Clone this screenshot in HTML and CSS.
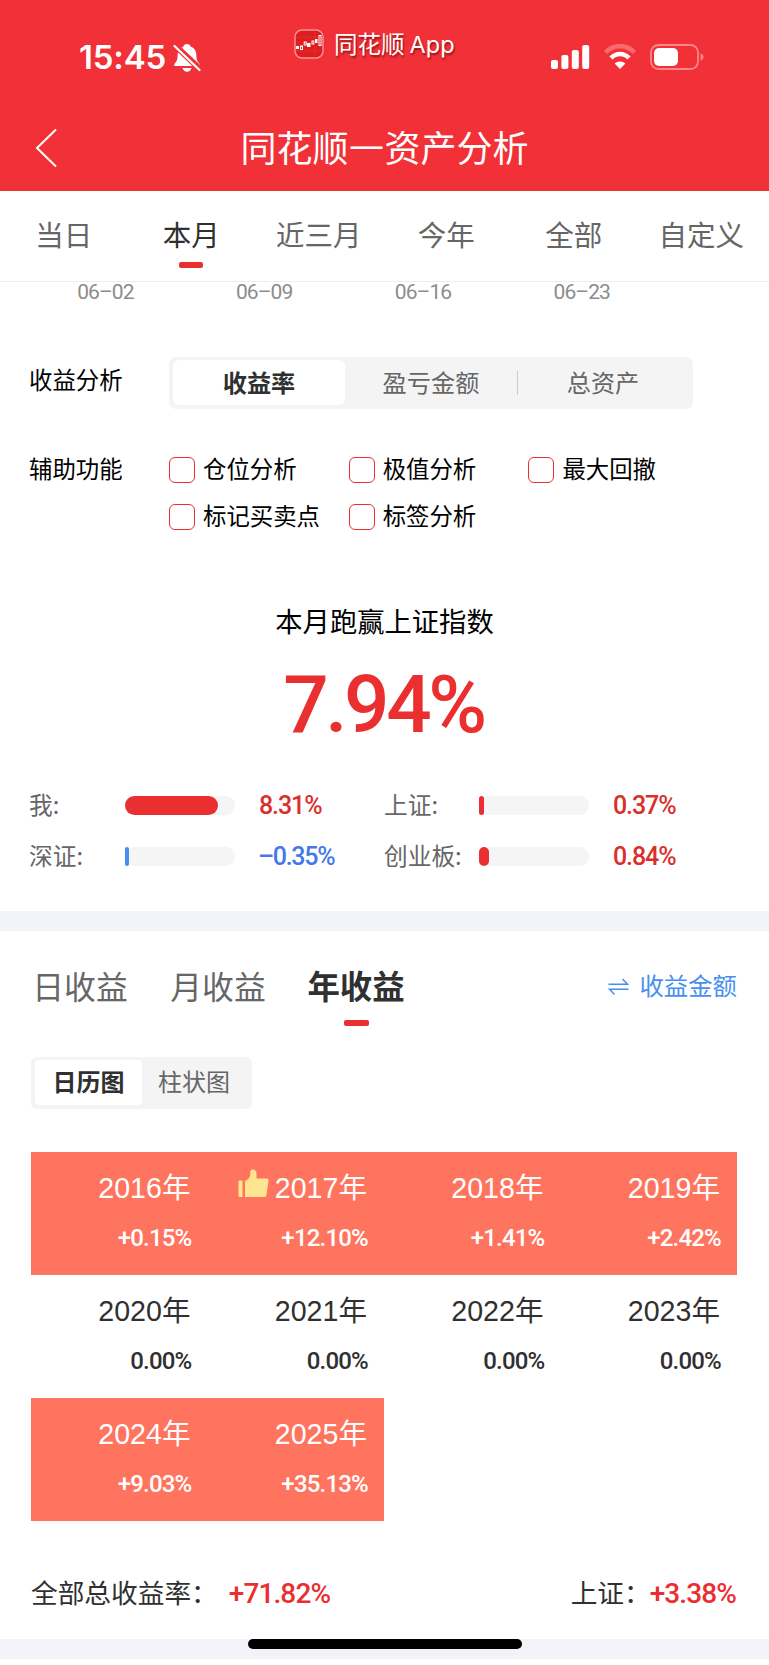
FILE: index.html
```html
<!DOCTYPE html>
<html lang="zh-CN">
<head>
  <meta charset="UTF-8">
  <title>同花顺—资产分析</title>
  <link rel="stylesheet" href="styles.css">
</head>
<body>
  <header class="header">
    <div class="status-bar">
      <div class="status-time">
        <span>15:45</span>
        <svg width="28" height="30" viewBox="0 0 28 30">
          <path d="M14 1c2 0 3.300 1.100 3.700 2.700 4 1.300 5.700 4.600 5.700 8.800 0 4.500 1.300 6.300 3 8.200.9 1 .8 2.300-.6 2.300H2.200c-1.400 0-1.500-1.300-.6-2.300 1.700-1.900 3-3.700 3-8.200 0-4.200 1.700-7.500 5.700-8.800C10.700 2.100 12 1 14 1z" fill="#fff"/>
          <path d="M9.500 25h9c-.6 2.300-2.400 3.700-4.500 3.700S10.100 27.300 9.500 25z" fill="#fff"/>
          <path d="M0 .5L28 27" stroke="#f23037" stroke-width="6"/>
          <path d="M1.500 3L26.500 27" stroke="#fff" stroke-width="2.200" stroke-linecap="round"/>
        </svg>
      </div>
      <div class="status-app">
        <svg width="30" height="30" viewBox="0 0 30 30">
          <rect x="1" y="1" width="28" height="28" rx="7" fill="#dd1d20" stroke="#f79296" stroke-width="1.500"/>
          <path d="M1 8h28M1 22h28M21 1v28" stroke="#e8393b" stroke-width=".6"/>
          <g fill="#fff">
            <rect x="2" y="17" width="3" height="3"/>
            <rect x="13" y="14" width="3.500" height="4"/>
            <rect x="21" y="10" width="2.500" height="4"/>
          </g>
          <g fill="none" stroke="#fff" stroke-width="1">
            <rect x="6.500" y="17" width="2" height="3.500"/>
            <rect x="10.200" y="13" width="2" height="3"/>
            <rect x="18" y="12" width="1.800" height="3"/>
            <rect x="25" y="6.500" width="2" height="10"/>
          </g>
        </svg>
        <span>同花顺 App</span>
      </div>
      <div class="status-icons">
        <svg width="39" height="26" viewBox="0 0 39 26" fill="#fff">
          <rect x="0" y="16" width="7" height="9" rx="2"/>
          <rect x="10.400" y="11" width="7" height="14" rx="2"/>
          <rect x="20.800" y="6" width="7" height="19" rx="2"/>
          <rect x="31.200" y="1" width="7" height="24" rx="2"/>
        </svg>
        <svg width="32" height="26" viewBox="0 0 32 26" fill="none">
          <path d="M1.500 8.500C9.500 0 22.500 0 30.500 8.500" stroke="#f76a6f" stroke-width="4.500"/>
          <path d="M7 14C12 8.700 20 8.700 25 14" stroke="#fff" stroke-width="4.500"/>
          <path d="M16 25l-5.400-5.600c3-2.700 7.800-2.700 10.800 0z" fill="#fff"/>
        </svg>
        <svg width="54" height="26" viewBox="0 0 54 26">
          <rect x="1" y="1" width="47" height="24" rx="7.500" fill="none" stroke="#f9878b" stroke-width="1.800"/>
          <rect x="4" y="4" width="24" height="18" rx="5" fill="#fff"/>
          <path d="M50.500 9.500c2 .6 3 1.900 3 3.500s-1 2.900-3 3.500z" fill="#f9878b"/>
        </svg>
      </div>
    </div>
    <div class="nav-bar">
      <svg class="back" width="22" height="40" viewBox="0 0 22 40">
        <path d="M21 1.500L2 20l19 18.500" fill="none" stroke="#fff" stroke-width="2"/>
      </svg>
      <h1>同花顺<span class="dash">—</span>资产分析</h1>
    </div>
  </header>

  <nav class="period-tabs">
    <span>当日</span>
    <span class="active">本月</span>
    <span>近三月</span>
    <span>今年</span>
    <span>全部</span>
    <span>自定义</span>
  </nav>

  <section class="analysis">
    <div class="dates">
      <span>06–02</span>
      <span>06–09</span>
      <span>06–16</span>
      <span>06–23</span>
    </div>

    <div class="row">
      <div class="label">收益分析</div>
      <div class="segment">
        <span class="active">收益率</span>
        <span>盈亏金额</span>
        <span class="divided">总资产</span>
      </div>
    </div>

    <div class="row helpers">
      <div class="label">辅助功能</div>
      <div class="checks">
        <label><i class="box"></i>仓位分析</label>
        <label><i class="box"></i>极值分析</label>
        <label><i class="box"></i>最大回撤</label>
        <label><i class="box"></i>标记买卖点</label>
        <label><i class="box"></i>标签分析</label>
      </div>
    </div>

    <div class="summary-title">本月跑赢上证指数</div>
    <div class="summary-value">7.94%</div>

    <div class="compare">
      <div class="compare-item">
        <span class="name">我:</span>
        <span class="track"><i class="fill" style="width: 93px"></i></span>
        <span class="value">8.31%</span>
      </div>
      <div class="compare-item">
        <span class="name">上证:</span>
        <span class="track"><i class="fill" style="width: 5px"></i></span>
        <span class="value">0.37%</span>
      </div>
      <div class="compare-item down">
        <span class="name">深证:</span>
        <span class="track"><i class="fill" style="width: 4px"></i></span>
        <span class="value">–0.35%</span>
      </div>
      <div class="compare-item">
        <span class="name">创业板:</span>
        <span class="track"><i class="fill" style="width: 10px"></i></span>
        <span class="value">0.84%</span>
      </div>
    </div>
  </section>

  <section class="income">
    <div class="income-head">
      <span>日收益</span>
      <span>月收益</span>
      <span class="active">年收益</span>
      <a class="switch">
        <svg width="21" height="18" viewBox="0 0 21 18" fill="none" stroke="#468ff0" stroke-width="1.500">
          <path d="M.5 6.200h19L14.500 1"/>
          <path d="M20.500 11.300h-19L6.500 16.500"/>
        </svg>
        收益金额
      </a>
    </div>

    <div class="chart-toggle">
      <span class="active">日历图</span>
      <span>柱状图</span>
    </div>

    <div class="years">
      <div class="year up"><b>2016年</b><em>+0.15%</em></div>
      <div class="year up">
        <b><svg class="thumb" width="31" height="29" viewBox="0 0 31 29" fill="#ffe58f">
          <path d="M.5 12.500q0-1 1-1H4.500v16.500H1.500q-1 0-1-1z"/>
          <path d="M7 12c3.500-1.500 5-3.500 5.300-6.500V3c0-1.700 1-2.500 2.500-2.500 2.300 0 3.700 1.500 3.700 4V9.500h10c1.600 0 2.300.8 2 2.300l-2 14.500c-.2 1.200-.9 1.700-2 1.700H7z"/>
        </svg>2017年</b><em>+12.10%</em>
      </div>
      <div class="year up"><b>2018年</b><em>+1.41%</em></div>
      <div class="year up"><b>2019年</b><em>+2.42%</em></div>
      <div class="year"><b>2020年</b><em>0.00%</em></div>
      <div class="year"><b>2021年</b><em>0.00%</em></div>
      <div class="year"><b>2022年</b><em>0.00%</em></div>
      <div class="year"><b>2023年</b><em>0.00%</em></div>
      <div class="year up"><b>2024年</b><em>+9.03%</em></div>
      <div class="year up"><b>2025年</b><em>+35.13%</em></div>
    </div>

    <div class="total">
      <span>全部总收益率：</span><strong>+71.82%</strong>
      <span class="index">上证：</span><strong>+3.38%</strong>
    </div>
  </section>

  <footer class="bottom"><div class="home-indicator"></div></footer>
</body>
</html>
```

FILE: styles.css
```css
* { box-sizing: border-box; }
body {
  margin: 0;
  width: 769px;
  height: 1665px;
  overflow: hidden;
  background: #fff;
  color: #000;
  font-family: "Noto Sans CJK SC", sans-serif;
}
svg { display: block; flex: none; }
i, em { font-style: normal; }

/* header */
.header { height: 191px; background: #f23037; color: #fff; }
.status-bar { display: flex; height: 102px; }
.status-time { display: flex; width: 293px; padding: 39px 0 0 79px; gap: 6px; }
.status-time span { width: 88px; font: 600 33px/36px Inter, sans-serif; letter-spacing: -0.2px; white-space: nowrap; }
.status-time svg { margin-top: 4px; }
.status-app { display: flex; width: 258px; padding: 29px 0 0 1px; gap: 10px; font: 23.5px/30px Inter, "Noto Sans CJK SC", sans-serif; word-spacing: -1.500px; text-shadow: 1px 2px 2px rgba(90, 0, 0, .6); }
.status-app span { margin-top: 1px; }
.status-icons { display: flex; gap: 14px; padding-top: 44px; }
.nav-bar { display: flex; height: 89px; padding: 0 36px 0 35px; }
.nav-bar h1 { flex: 1; margin: 4px 21px 0 0; font-size: 36px; line-height: 80px; font-weight: 400; text-align: center; }
.dash { -webkit-text-stroke: 1px #fff; }
.back { margin-top: 26px; }

/* period tabs */
.period-tabs { display: grid; grid-template-columns: repeat(6, 127.5px); height: 91px; border-bottom: 1px solid #eee; }
.period-tabs span { display: flex; flex-direction: column; align-items: center; padding-top: 22px; color: #666; font-size: 28.500px; line-height: 42px; }
.period-tabs .active { color: #303030; }
.period-tabs .active::after { content: ""; width: 24px; height: 6px; margin-top: 7px; border-radius: 2px; background: #ea2f31; }

/* chart dates */
.dates { display: grid; grid-template-columns: repeat(4, 158.800px); height: 75px; padding-left: 26px; text-align: center; color: #8c8c8c; font: 21px/21px Roboto, sans-serif; letter-spacing: -0.9px; }

.row { display: flex; height: 52px; padding-left: 29px; }
.label { width: 140px; font-size: 23.400px; line-height: 44px; }
.segment { display: grid; grid-template-columns: 172px 1fr 172px; width: 524px; padding: 3px 4px 4px; border-radius: 7px; background: #f4f4f4; color: #666; font-size: 24.200px; line-height: 43px; text-align: center; }
.segment .active { border-radius: 6px; background: #fff; color: #303030; font-weight: 700; }
.segment .divided { background: linear-gradient(#ccc, #ccc) 0 11px / 1px 24px no-repeat; }
.helpers { height: 190px; padding-top: 38px; }
.helpers .label { line-height: 43px; }
.checks { display: grid; grid-template-columns: repeat(3, 179.700px); grid-auto-rows: 47px; }
.checks label { display: flex; gap: 8px; font-size: 23.400px; line-height: 43px; }
.box { width: 26px; height: 26px; margin-top: 10px; border: 1px solid #ea2f31; border-radius: 6px; }

/* summary */
.summary-title { height: 44px; font-size: 27.300px; line-height: 42px; text-align: center; }
.summary-value { height: 140px; padding-right: 2px; color: #ea2f31; font: 500 80px/124px Roboto, sans-serif; letter-spacing: -3.400px; text-align: center; }
.compare { display: grid; grid-template-columns: 355px 1fr; grid-auto-rows: 51px; height: 128px; padding: 2px 0 0 29px; }
.compare-item { display: flex; align-items: center; height: 40px; }
.compare .name { width: 96px; margin-top: -3px; color: #666; font-size: 23.700px; line-height: 40px; }
.compare-item:nth-child(even) .name { width: 95px; }
.track { width: 110px; height: 19px; border-radius: 10px; background: #f5f5f5; }
.fill { display: block; height: 19px; border-radius: 10px; background: #ea2f31; }
.compare .value { margin: 2px 0 0 24px; color: #d9302b; font: 500 25px/40px Roboto, sans-serif; letter-spacing: -1.100px; }
.down .fill { border-radius: 2px; background: #468ff0; }
.compare .down .value { margin-left: 23px; color: #4577e8; letter-spacing: -1.300px; }

/* income */
.income { height: 728px; border-top: 20px solid #f2f3f8; padding: 0 32px 0 31px; }
.income-head { display: flex; height: 126px; padding: 30px 0 0 1px; font-size: 31.800px; line-height: 48px; color: #666; white-space: nowrap; }
.income-head > span { display: flex; flex-direction: column; align-items: center; width: 96px; margin-right: 42px; }
.income-head .active { color: #303030; font-size: 32.400px; font-weight: 700; }
.income-head .active::after { content: ""; width: 25px; height: 6px; margin-top: 11px; border-radius: 2px; background: #ea2f31; }
.switch { display: flex; gap: 10px; margin-left: auto; color: #468ff0; font-size: 24.400px; line-height: 47px; }
.switch svg { margin-top: 17px; }
.chart-toggle { display: grid; grid-template-columns: 107px 104px; width: 221px; height: 52px; padding: 3px 4px 4px; border-radius: 6px; background: #f4f4f4; color: #666; font-size: 24px; line-height: 42px; text-align: center; }
.chart-toggle .active { border-radius: 4px; background: #fff; color: #303030; font-weight: 700; }

.years { display: grid; grid-template-columns: repeat(4, 1fr); grid-auto-rows: 123px; margin-top: 43px; }
.year { display: flex; flex-direction: column; padding: 16px 16px 0 0; text-align: right; color: #303030; }
.year.up { background: #ff745f; color: #fff; }
.year b { display: flex; justify-content: flex-end; height: 40px; padding-right: 1px; font: 400 28.600px/40px "Liberation Sans", "Noto Sans CJK SC", sans-serif; }
.year em { margin-top: 10px; font: 500 24px/40px Roboto, sans-serif; letter-spacing: -0.800px; }
.thumb { margin: 1px 6px 0 0; }

.total { display: flex; margin-top: 51px; color: #303030; font-size: 26.700px; line-height: 40px; }
.total strong { margin: 2px 0 0 11px; color: #ea2f31; font: 500 28px/40px Roboto, sans-serif; letter-spacing: -0.900px; }
.total .index { margin-left: auto; }
.total .index + strong { margin: 2px 1px 0 -1px; }

.bottom { height: 20px; background: #f2f3f8; }
.home-indicator { width: 274px; height: 10px; margin: 0 auto; border-radius: 5px; background: #000; }
```
